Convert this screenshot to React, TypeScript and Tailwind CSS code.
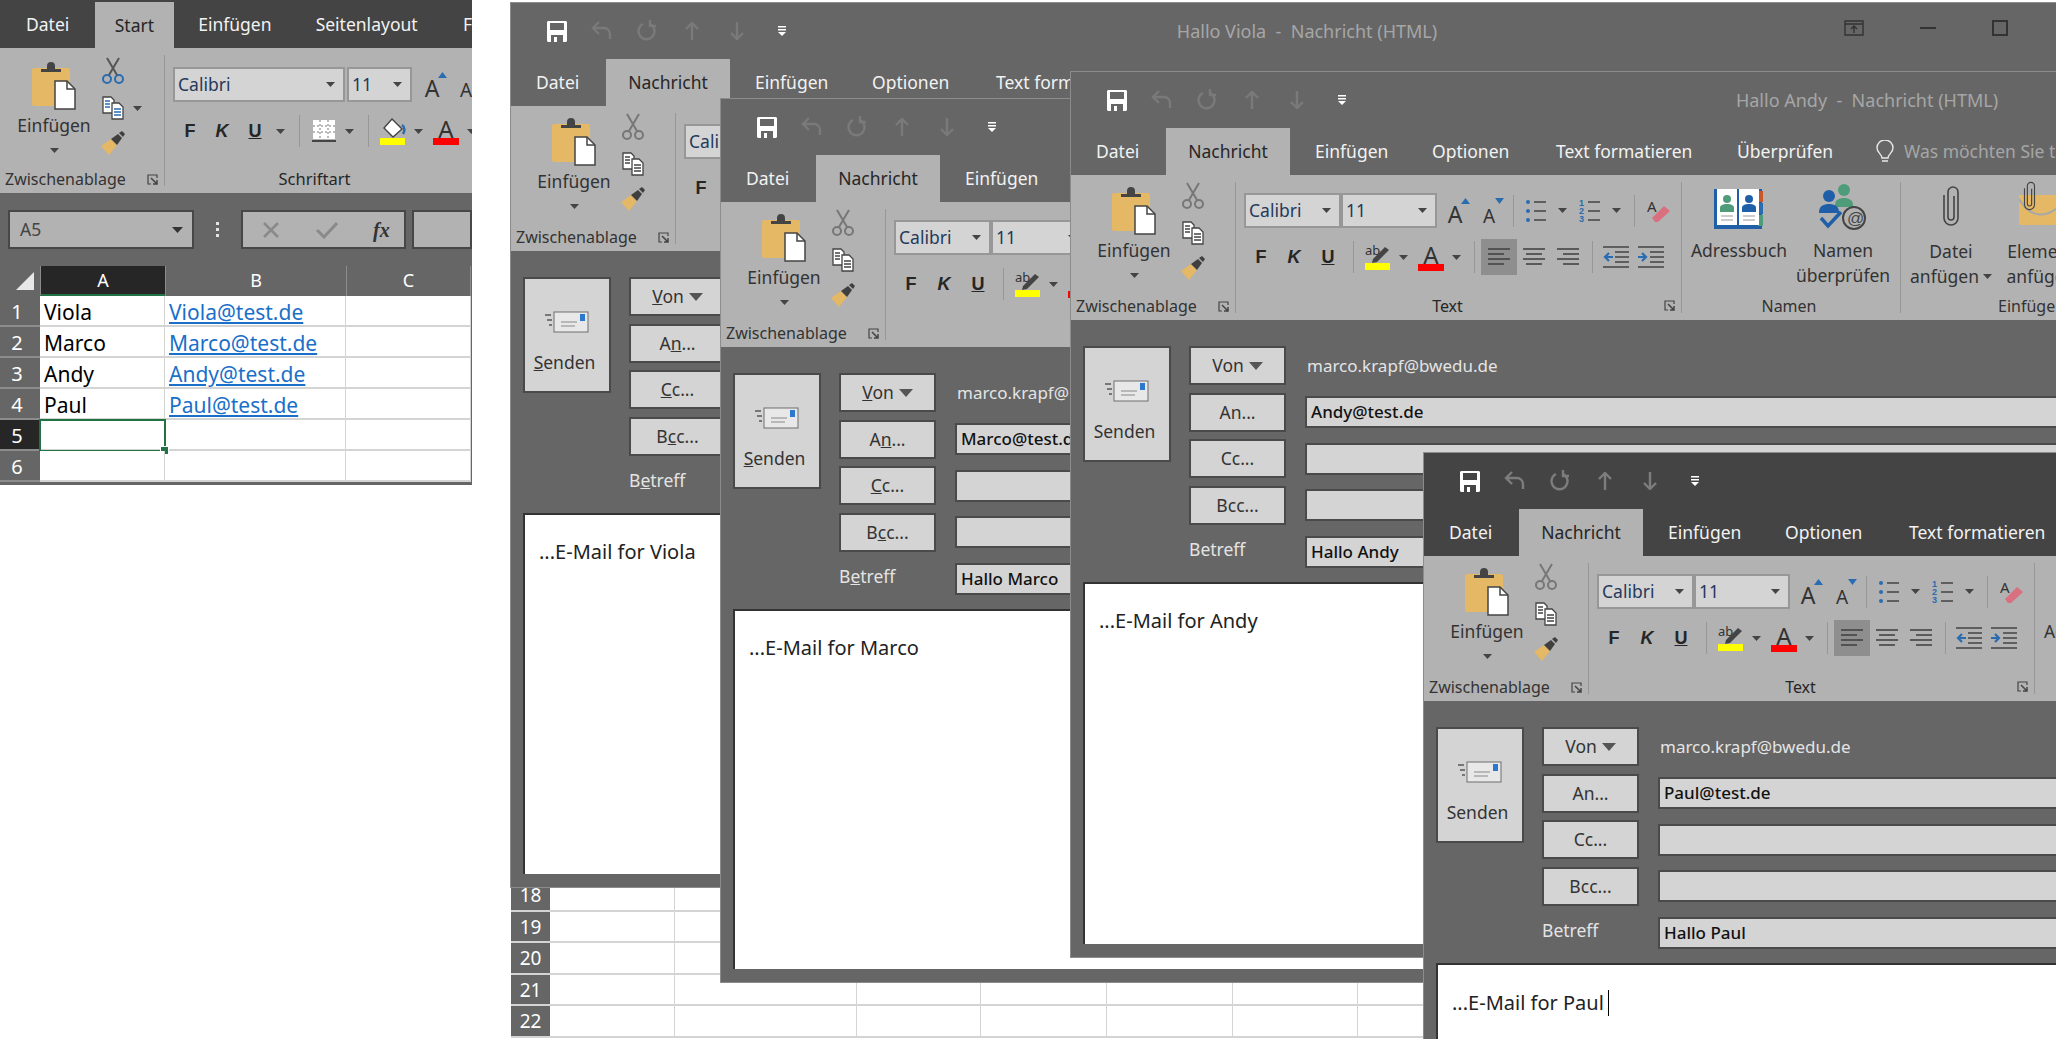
import React from "react";

const Caret = ({ className = "" }: { className?: string }) => (
  <svg width="9" height="5" viewBox="0 0 9 5" className={`shrink-0 ${className}`}>
    <path d="M0 0h9L4.5 5z" fill="#444" />
  </svg>
);

const Sep = ({ className = "" }: { className?: string }) => <div className={`w-px h-[32px] bg-[#979797] shrink-0 ${className}`} />;

const PasteIcon = () => (
  <svg width="44" height="48" viewBox="0 0 44 48">
    <rect x="0" y="6" width="38" height="38" rx="2" fill="#e4b864" />
    <path d="M9 10V7h6V4a4 4 0 0 1 8 0v3h6v3z" fill="#444" />
    <path d="M23 19h12l8 8v20H23z" fill="#fff" stroke="#444" strokeWidth="1.5" />
    <path d="M35 19v8h8" fill="none" stroke="#444" strokeWidth="1.5" />
  </svg>
);

const ScissorsIcon = ({ color, blade }: { color: string; blade: string }) => (
  <svg width="24" height="28" viewBox="0 0 24 28" fill="none" stroke={color} strokeWidth="2">
    <circle cx="6" cy="22" r="4" />
    <circle cx="18" cy="22" r="4" />
    <path d="M8 18 18 1M16 18 6 1" stroke={blade} />
  </svg>
);

const CopyIcon = ({ blue }: { blue?: boolean }) => (
  <svg width="24" height="24" viewBox="0 0 24 24" fill="#fff" stroke="#444" strokeWidth="1.3">
    <path d="M2 1h8l3 3v13H2z" />
    <path d="M4 5h5M4 8h5M4 11h5" stroke={blue ? "#2a6cb0" : "#444"} />
    <path d="M11 7h7l4 4v12H11z" />
    <path d="M13 13h7M13 16h7M13 19h7" stroke={blue ? "#2a6cb0" : "#444"} />
  </svg>
);

const BrushIcon = () => (
  <svg width="26" height="26" viewBox="0 0 26 26">
    <path d="M1 16 11 9l6 6-8 10z" fill="#e4b864" />
    <path d="M11 9l7-5 4 4-5 7z" fill="#3f3f3f" />
    <path d="M19 3l3-2 3 3-2 3z" fill="#3f3f3f" />
  </svg>
);

const Launcher = () => (
  <svg width="11" height="11" viewBox="0 0 11 11" fill="none" stroke="#444" strokeWidth="1.2">
    <path d="M10 4V1H1v9h3" />
    <path d="M4 4l6 6M10 6v4H6" strokeWidth="1.5" />
  </svg>
);

const SaveIcon = ({ bg }: { bg: string }) => (
  <svg width="22" height="23" viewBox="0 0 22 23">
    <path d="M2 1h18l1 1v19l-1 1H2l-1-1V2z" fill="#fff" />
    <rect x="4" y="3" width="14" height="7" fill={bg} />
    <rect x="5" y="15" width="12" height="7" fill={bg} />
    <rect x="8" y="17" width="3" height="5" fill="#fff" />
  </svg>
);

const QuickBar = ({ dim, bg }: { dim: string; bg: string }) => (
  <div className="flex items-center pl-[23px] h-[56px] shrink-0">
    <div className="w-[45px] flex justify-center"><SaveIcon bg={bg} /></div>
    <div className="w-[45px] flex justify-center">
      <svg width="22" height="20" viewBox="0 0 22 20" fill="none" stroke={dim} strokeWidth="2.4">
        <path d="M8 1 2 7l6 6M2 7h11a6 6 0 0 1 6 6v5" />
      </svg>
    </div>
    <div className="w-[45px] flex justify-center">
      <svg width="20" height="22" viewBox="0 0 20 22" fill="none" stroke={dim} strokeWidth="2.4">
        <path d="M13 4a8 8 0 1 1-7 0M13 0v6h6" />
      </svg>
    </div>
    <div className="w-[45px] flex justify-center">
      <svg width="14" height="18" viewBox="0 0 14 18" fill="none" stroke={dim} strokeWidth="2.4">
        <path d="M1 7l6-6 6 6M7 1v17" />
      </svg>
    </div>
    <div className="w-[45px] flex justify-center">
      <svg width="14" height="18" viewBox="0 0 14 18" fill="none" stroke={dim} strokeWidth="2.4">
        <path d="M1 11l6 6 6-6M7 17V0" />
      </svg>
    </div>
    <div className="w-[45px] flex justify-center">
      <svg width="10" height="10" viewBox="0 0 10 10">
        <path d="M1 0h8v1.6H1zM1 3h8v1.6H1z" fill="#fff" />
        <path d="M1 6h8L5 10z" fill="#fff" />
      </svg>
    </div>
  </div>
);

const TabBar = () => (
  <div className="flex h-[47px] shrink-0 text-[#f2f2f2] text-[17.5px] whitespace-nowrap">
    <div className="w-[95px] flex items-center pl-[25px]">Datei</div>
    <div className="w-[124px] flex items-center justify-center bg-[#b2b2b2] text-[#262626]">Nachricht</div>
    <div className="w-[122px] flex items-center pl-[25px]">Einfügen</div>
    <div className="w-[111px] flex items-center pl-[20px]">Optionen</div>
    <div className="w-[198px] flex items-center pl-[33px]">Text formatieren</div>
    <div className="w-[155px] flex items-center pl-[16px]">Überprüfen</div>
    <div className="flex items-center gap-[10px] text-[#a6a6a6]">
      <svg width="18" height="24" viewBox="0 0 18 24" fill="none" stroke="#e8e8e8" strokeWidth="1.4">
        <path d="M6 18c0-4-5-5-5-10a8 8 0 0 1 16 0c0 5-5 6-5 10zM6 21h6" />
      </svg>
      Was möchten Sie tun?
    </div>
  </div>
);

const ClipboardGroup = ({ excel }: { excel?: boolean }) => (
  <div className="relative w-[165px] shrink-0 border-r border-[#979797] text-[#333]">
    <div className={`flex ${excel ? "pt-[7px] pl-[4px]" : "pt-[5px] pl-[13px]"}`}>
      <div className="w-[100px] flex flex-col items-center">
        <PasteIcon />
        <div className="text-[17.5px] leading-[20px] mt-[5px]">Einfügen</div>
        <Caret className="mt-[13px]" />
      </div>
      <div className="w-[36px] flex flex-col items-center -mt-[5px] -ml-[9px]">
        <ScissorsIcon color={excel ? "#2a6cb0" : "#777"} blade={excel ? "#555" : "#777"} />
        <div className="flex items-center relative mt-[11px]">
          <CopyIcon blue={excel} />
          {excel && <Caret className="absolute left-[32px] top-[10px]" />}
        </div>
        <div className="mt-[10px]"><BrushIcon /></div>
      </div>
    </div>
    <div className="absolute left-[5px] right-[6px] -bottom-[3px] flex items-center justify-between text-[16px] leading-[20px]">
      <span>Zwischenablage</span>
      <Launcher />
    </div>
  </div>
);

const Box = ({ text, className }: { text: string; className: string }) => (
  <div className={`h-[35px] shrink-0 bg-[#d4d4d4] border-2 border-[#979797] flex items-center justify-between pl-[3px] pr-[8px] text-[#243a5c] text-[17.5px] ${className}`}>
    <span>{text}</span>
    <Caret />
  </div>
);

const GrowA = ({ small, up }: { small?: boolean; up: boolean }) => (
  <div className="relative flex justify-center items-end h-[30px] text-[#333] w-[30px]">
    <span className={small ? "text-[19px] leading-[20px]" : "text-[23px] leading-[23px]"}>A</span>
    <svg width="9" height="6" viewBox="0 0 9 6" className="absolute right-0 top-[2px]">
      <path d={up ? "M0 6h9L4.5 0z" : "M0 0h9L4.5 6z"} fill="#2a6cb0" />
    </svg>
  </div>
);

const Lines = ({ rows, align }: { rows: number[]; align: "l" | "c" | "r" }) => (
  <svg width="24" height="22" viewBox="0 0 24 22" stroke="#444" strokeWidth="1.6">
    {rows.map((w, i) => {
      const x = align === "l" ? 1 : align === "c" ? 12 - w / 2 : 23 - w;
      return <path key={i} d={`M${x} ${3 + i * 5}h${w}`} />;
    })}
  </svg>
);

const BulletIcon = ({ numbered }: { numbered?: boolean }) => (
  <svg width="22" height="24" viewBox="0 0 22 24" stroke="#444" strokeWidth="1.5">
    <path d="M9 3h12M9 12h12M9 21h12" />
    {numbered ? (
      <g fill="#2a6cb0" stroke="none" fontSize="9" fontFamily="Liberation Sans" fontWeight="700">
        <text x="0" y="7">1</text>
        <text x="0" y="15">2</text>
        <text x="0" y="23">3</text>
      </g>
    ) : (
      <g fill="#2a6cb0" stroke="none">
        <circle cx="3" cy="3" r="2" />
        <circle cx="3" cy="12" r="2" />
        <circle cx="3" cy="21" r="2" />
      </g>
    )}
  </svg>
);

const IndentIcon = ({ out }: { out?: boolean }) => (
  <svg width="26" height="24" viewBox="0 0 26 24" stroke="#444" strokeWidth="1.6" fill="none">
    <path d="M0 2h26M12 7h14M12 12h14M12 17h14M0 22h26" />
    <path d={out ? "M10 12H2m4-4-4 4 4 4" : "M0 12h8m-4-4 4 4-4 4"} stroke="#2a6cb0" strokeWidth="2.2" />
  </svg>
);

const Highlight = () => (
  <svg width="26" height="26" viewBox="0 0 26 26">
    <text x="0" y="11" fontSize="13" fontFamily="Noto Sans" fill="#333">ab</text>
    <path d="M8 15 20 3l4 3-12 12-5 1z" fill="#444" />
    <rect x="0" y="19" width="25" height="7" fill="#ffff00" />
  </svg>
);

const FontColor = () => (
  <div className="relative w-[26px] h-[28px] flex justify-center text-[#333] text-[24px] leading-[24px]">
    A
    <div className="absolute left-0 right-0 bottom-0 h-[7px] bg-[#ff0000]" />
  </div>
);

const Eraser = () => (
  <svg width="24" height="24" viewBox="0 0 24 24">
    <text x="0" y="13" fontSize="15" fontFamily="Noto Sans" fill="#333">A</text>
    <path d="M5 19l12-12 6 5-12 11h-3z" fill="#d9707f" />
  </svg>
);

const boldLetter = "font-['Liberation_Sans',sans-serif] font-bold text-[18px] text-center";

const TextGroup = () => (
  <div className="relative w-[446px] shrink-0 border-r border-[#979797] pl-[8px] pt-[11px] text-[#262626]">
    <div className="flex items-center h-[35px]">
      <Box text="Calibri" className="w-[97px]" />
      <Box text="11" className="w-[96px]" />
      <div className="w-[36px] flex justify-center"><GrowA up /></div>
      <div className="w-[32px] flex justify-center"><GrowA small up={false} /></div>
      <Sep className="ml-[8px]" />
      <div className="ml-[11px]"><BulletIcon /></div>
      <Caret className="ml-[11px]" />
      <div className="ml-[12px]"><BulletIcon numbered /></div>
      <Caret className="ml-[11px]" />
      <Sep className="ml-[13px]" />
      <div className="ml-[12px]"><Eraser /></div>
    </div>
    <div className="flex items-center h-[36px] mt-[11px]">
      <div className={`w-[34px] ${boldLetter}`}>F</div>
      <div className={`w-[32px] italic ${boldLetter}`}>K</div>
      <div className={`w-[36px] underline ${boldLetter}`}>U</div>
      <Sep className="ml-[7px]" />
      <div className="ml-[11px]"><Highlight /></div>
      <Caret className="ml-[8px]" />
      <div className="ml-[10px]"><FontColor /></div>
      <Caret className="ml-[8px]" />
      <Sep className="ml-[13px]" />
      <div className="ml-[6px] w-[36px] h-[36px] bg-[#8e8e8e] flex items-center justify-center">
        <Lines rows={[22, 16, 22, 16]} align="l" />
      </div>
      <div className="w-[35px] flex justify-center ml-[-1px]"><Lines rows={[22, 16, 22, 16]} align="c" /></div>
      <div className="w-[33px] flex justify-center"><Lines rows={[22, 16, 22, 16]} align="r" /></div>
      <Sep className="ml-[8px]" />
      <div className="ml-[10px]"><IndentIcon out /></div>
      <div className="ml-[9px]"><IndentIcon /></div>
    </div>
    <div className="absolute left-0 right-[6px] -bottom-[3px] text-[16px] leading-[20px]">
      <div className="text-center pr-[16px]">Text</div>
      <div className="absolute right-0 top-[4px]"><Launcher /></div>
    </div>
  </div>
);

const AddressBook = () => (
  <svg width="50" height="42" viewBox="0 0 50 42">
    <path d="M0 1h48v40H0z" fill="#1f5fa8" />
    <path d="M44 3h5v11h-5z" fill="#c9572c" />
    <path d="M44 15h5v11h-5z" fill="#2a6cb0" />
    <path d="M44 27h5v11h-5z" fill="#4f9c7a" />
    <path d="M3 1h20v36H3zM25 1h20v36H25z" fill="#fff" />
    <circle cx="13" cy="11" r="4" fill="#4f9c7a" />
    <path d="M6 24v-4c0-3 3-4 7-4s7 1 7 4v4z" fill="#4f9c7a" />
    <circle cx="35" cy="11" r="4" fill="#1f5fa8" />
    <path d="M28 24v-4c0-3 3-4 7-4s7 1 7 4v4z" fill="#1f5fa8" />
    <path d="M7 28h12M7 32h12M29 28h12M29 32h12" stroke="#999" />
  </svg>
);

const NamesIcon = () => (
  <svg width="50" height="48" viewBox="0 0 50 48">
    <circle cx="26" cy="7" r="6" fill="#4f9c7a" />
    <path d="M17 22c0-5 4-7 9-7s9 2 9 7v2H17z" fill="#4f9c7a" />
    <circle cx="11" cy="13" r="6" fill="#1f5fa8" />
    <path d="M1 29c0-6 5-8 10-8s10 2 10 8v1H1z" fill="#1f5fa8" />
    <path d="M3 35l7 8L23 29" fill="none" stroke="#1f5fa8" strokeWidth="3.5" />
    <circle cx="36" cy="35" r="11" fill="#b2b2b2" stroke="#444" strokeWidth="2" />
    <text x="29" y="41" fontSize="17" fontFamily="Liberation Sans" fill="#444">@</text>
  </svg>
);

const Clip = ({ h = 42 }: { h?: number }) => (
  <svg width={Math.round(h * 0.42)} height={h} viewBox="0 0 18 42" fill="none" stroke="#444" strokeWidth="1.6">
    <path d="M12 11v21a3 3 0 0 1-6 0V7a5 5 0 0 1 10 0v26a7 7 0 0 1-14 0V10" />
  </svg>
);

const NamenGroup = () => (
  <div className="relative w-[219px] shrink-0 border-r border-[#979797] text-[#333] text-[17.5px] leading-[25px] text-center flex">
    <div className="w-[114px] flex flex-col items-center pt-[6px]">
      <AddressBook />
      <div className="mt-[8px]">Adressbuch</div>
    </div>
    <div className="w-[94px] flex flex-col items-center pt-[1px] whitespace-nowrap">
      <NamesIcon />
      <div className="mt-[7px]">Namen</div>
      <div>überprüfen</div>
    </div>
    <div className="absolute left-0 right-[4px] -bottom-[3px] text-[16px] leading-[20px]">Namen</div>
  </div>
);

const AttachGroup = () => (
  <div className="relative w-[300px] shrink-0 text-[#333] text-[17.5px] leading-[25px] text-center flex">
    <div className="w-[90px] ml-[5px] flex flex-col items-center pt-[3px]">
      <Clip />
      <div className="mt-[12px]">Datei</div>
      <div className="flex items-center gap-[4px]">anfügen <Caret /></div>
    </div>
    <div className="w-[90px] flex flex-col items-center pt-[3px]">
      <div className="relative w-[44px] h-[42px]">
        <svg width="44" height="30" viewBox="0 0 44 30" className="absolute left-0 top-[10px]">
          <path d="M0 0h44v30H0z" fill="#e4b864" />
          <path d="M0 4c12 20 28 20 44 4" fill="none" stroke="#a8a8a8" strokeWidth="2" />
        </svg>
        <div className="absolute left-[4px] top-[-4px]"><Clip h={30} /></div>
      </div>
      <div className="mt-[12px]">Element</div>
      <div>anfügen</div>
    </div>
    <div className="absolute left-[97px] -bottom-[3px] text-[16px] leading-[20px]">Einfügen</div>
  </div>
);

const SendIcon = () => (
  <svg width="44" height="22" viewBox="0 0 44 22">
    <rect x="9" y="1" width="34" height="20" fill="#e8e8e8" stroke="#6e6e6e" />
    <path d="M16 11h16M16 15h14" stroke="#a8a8a8" strokeWidth="1.5" />
    <rect x="35" y="3" width="5" height="7" fill="#2b78d0" />
    <path d="M0 4h6M2 9h5M4 14h3" stroke="#777" strokeWidth="2" />
  </svg>
);

const SideButton = ({ children }: { children: React.ReactNode }) => (
  <div className="w-[97px] h-[39px] bg-[#d4d4d4] border-2 border-[#4a4a4a] flex items-center justify-center gap-[5px] text-[#333] text-[17.5px] shrink-0">
    {children}
  </div>
);

const Field = ({ text }: { text?: string }) => (
  <div className="ml-[19px] flex-1 h-[32px] bg-[#d4d4d4] border-2 border-[#4a4a4a] flex items-center pl-[4px] text-[17px] font-medium text-[#111]">
    {text}
  </div>
);

// accel: the two background windows still show their keyboard underlines
const Key = ({ on, children }: { on?: boolean; children: React.ReactNode }) => (
  <span className={on ? "underline" : ""}>{children}</span>
);

type MailProps = {
  frame: string;
  title?: string;
  email: string;
  to: string;
  subject: string;
  body: string;
  active?: boolean;
  accel?: boolean;
};

const MailWindow = ({ frame, title, email, to, subject, body, active, accel }: MailProps) => (
  <div className={`absolute ${frame} w-[1600px] flex flex-col border border-[#8c8c8c] ${active ? "bg-[#444]" : "bg-[#666]"}`}>
    <QuickBar dim={active ? "#7d7d7d" : "#7a7a7a"} bg={active ? "#444" : "#666"} />
    {title && (
      <div className="absolute left-[796px] top-[15px] -translate-x-1/2 text-[#a6a6a6] text-[18px] whitespace-pre">{title}</div>
    )}
    {title && (
      <div className="absolute left-[1333px] top-[17px] flex items-center">
        <div className="w-[76px] flex justify-start">
          <svg width="20" height="16" viewBox="0 0 20 16" fill="none" stroke="#333" strokeWidth="1.4">
            <path d="M1 1h18v14H1zM1 4h18M10 13V6M7 9l3-3 3 3" />
          </svg>
        </div>
        <div className="w-[72px] flex"><div className="w-[16px] h-[2px] bg-[#333]" /></div>
        <div className="w-[16px] h-[16px] border-2 border-[#333]" />
      </div>
    )}
    <TabBar />
    <div className="flex h-[145px] shrink-0 bg-[#b2b2b2] py-[7px]">
      <ClipboardGroup />
      <TextGroup />
      <NamenGroup />
      <AttachGroup />
    </div>
    <div className="flex-1 flex flex-col bg-[#666] min-h-0">
      <div className="flex px-[12px] pt-[26px] shrink-0">
        <div className="w-[88px] h-[116px] bg-[#d4d4d4] border-2 border-[#4a4a4a] flex flex-col items-center pt-[32px] text-[#333] text-[17.5px] leading-[24px] mr-[18px] shrink-0">
          <SendIcon />
          <div className="mt-[17px] pr-[5px]"><Key on={accel}>S</Key>enden</div>
        </div>
        <div className="flex-1 flex flex-col gap-[7.5px]">
          <div className="flex items-center">
            <SideButton>
              <span><Key on={accel}>V</Key>on</span>
              <svg width="14" height="8" viewBox="0 0 14 8"><path d="M0 0h14L7 8z" fill="#555" /></svg>
            </SideButton>
            <div className="ml-[21px] text-[17px] text-[#e4e4e4]">{email}</div>
          </div>
          <div className="flex items-center"><SideButton><span>A<Key on={accel}>n</Key>...</span></SideButton><Field text={to} /></div>
          <div className="flex items-center"><SideButton><span><Key on={accel}>C</Key>c...</span></SideButton><Field /></div>
          <div className="flex items-center"><SideButton><span>B<Key on={accel}>c</Key>c...</span></SideButton><Field /></div>
          <div className="flex items-center h-[39px]">
            <div className="w-[97px] pb-[4px] text-[17.5px] text-[#e4e4e4] shrink-0">B<Key on={accel}>e</Key>treff</div>
            <Field text={subject} />
          </div>
        </div>
      </div>
      <div className="mx-[12px] mt-[11px] mb-[13px] flex-1 bg-white border-t-2 border-l-2 border-[#333] pl-[14px] pt-[25px]">
        <div className="flex items-center text-[20px] leading-[24px] text-[#222]">
          {body}
          {active && <span className="ml-[4px] w-[1px] h-[26px] bg-black" />}
        </div>
      </div>
    </div>
  </div>
);

const excelRows = [
  { n: "1", name: "Viola", mail: "Viola@test.de" },
  { n: "2", name: "Marco", mail: "Marco@test.de" },
  { n: "3", name: "Andy", mail: "Andy@test.de" },
  { n: "4", name: "Paul", mail: "Paul@test.de" },
  { n: "5", name: "", mail: "" },
  { n: "6", name: "", mail: "" },
];

const ExcelWindow = () => (
  <div className="absolute left-0 top-0 w-[472px] h-[485px] overflow-hidden flex flex-col bg-[#666]">
    <div className="flex h-[48px] shrink-0 bg-[#444] text-[#f2f2f2] text-[17.5px]">
      <div className="w-[95px] flex items-center pl-[26px]">Datei</div>
      <div className="w-[80px] flex items-center justify-center bg-[#b2b2b2] text-[#262626] mt-[2px]">Start</div>
      <div className="w-[118px] flex items-center pl-[24px]">Einfügen</div>
      <div className="w-[148px] flex items-center pl-[24px]">Seitenlayout</div>
      <div className="flex items-center pl-[24px]">F</div>
    </div>
    <div className="flex h-[145px] shrink-0 bg-[#b2b2b2] py-[7px] overflow-hidden">
      <ClipboardGroup excel />
      <div className="relative flex-1 pl-[8px] pt-[12px] text-[#262626]">
        <div className="flex items-center h-[35px] whitespace-nowrap">
          <Box text="Calibri" className="w-[172px]" />
          <Box text="11" className="w-[65px] ml-[2px]" />
          <div className="w-[36px] ml-[2px] flex justify-center shrink-0"><GrowA up /></div>
          <div className="w-[32px] shrink-0 flex justify-center"><GrowA small up={false} /></div>
        </div>
        <div className="flex items-center h-[36px] mt-[11px]">
          <div className={`w-[34px] ${boldLetter}`}>F</div>
          <div className={`w-[30px] italic ${boldLetter}`}>K</div>
          <div className={`w-[36px] underline ${boldLetter}`}>U</div>
          <Caret className="ml-[3px]" />
          <Sep className="ml-[14px]" />
          <svg width="24" height="24" viewBox="0 0 24 24" className="ml-[12px] shrink-0">
            <rect x="1" y="1" width="22" height="19" fill="#fff" />
            <path d="M1 7h22M1 13h22M8 1v19M16 1v19" stroke="#777" strokeDasharray="2 2" />
            <path d="M0 22h24" stroke="#444" strokeWidth="2" />
          </svg>
          <Caret className="ml-[9px]" />
          <Sep className="ml-[14px]" />
          <svg width="26" height="28" viewBox="0 0 26 28" className="ml-[11px] shrink-0">
            <path d="M12 2l10 10-9 8-9-9z" fill="#fff" stroke="#444" strokeWidth="1.4" />
            <path d="M22 8c3 2 3 6 1 9" fill="none" stroke="#2a6cb0" strokeWidth="2.5" />
            <rect x="0" y="21" width="25" height="7" fill="#ffff00" />
          </svg>
          <Caret className="ml-[8px]" />
          <div className="ml-[10px] shrink-0"><FontColor /></div>
          <Caret className="ml-[8px]" />
        </div>
        <div className="absolute left-0 right-[12px] -bottom-[3px] text-center text-[16.5px] leading-[20px] pr-[6px]">Schriftart</div>
      </div>
    </div>
    <div className="flex items-center h-[73px] shrink-0 pl-[8px]">
      <div className="w-[192px] h-[39px] bg-[#b2b2b2] border-2 border-[#474747] flex items-center justify-between pl-[10px] pr-[9px] text-[#444] text-[17.5px]">
        A5
        <svg width="11" height="6" viewBox="0 0 11 6"><path d="M0 0h11L5.5 6z" fill="#333" /></svg>
      </div>
      <div className="w-[49px] flex flex-col items-center gap-[3px]">
        <div className="w-[3px] h-[3px] bg-[#e4e4e4]" />
        <div className="w-[3px] h-[3px] bg-[#e4e4e4]" />
        <div className="w-[3px] h-[3px] bg-[#e4e4e4]" />
      </div>
      <div className="w-[171px] h-[39px] bg-[#b2b2b2] border-2 border-[#474747] flex items-center">
        <svg width="18" height="18" viewBox="0 0 18 18" className="ml-[19px]" fill="none" stroke="#8a8a8a" strokeWidth="2.5"><path d="M2 2l14 14M16 2 2 16" /></svg>
        <svg width="22" height="18" viewBox="0 0 22 18" className="ml-[36px]" fill="none" stroke="#8a8a8a" strokeWidth="3"><path d="M1 9l7 7L21 2" /></svg>
        <span className="ml-[35px] font-['Liberation_Serif',serif] italic font-bold text-[#333] text-[20px]">fx</span>
      </div>
      <div className="ml-[6px] w-[60px] h-[39px] bg-[#b2b2b2] border-2 border-[#474747] shrink-0" />
    </div>
    <div className="flex h-[30px] shrink-0 text-white text-[18px] text-center leading-[28px]">
      <div className="w-[40px] relative">
        <svg width="18" height="18" viewBox="0 0 18 18" className="absolute left-[16px] top-[6px]"><path d="M18 0v18H0z" fill="#e8e8e8" /></svg>
      </div>
      <div className="w-[125px] bg-[#262626] border-b-2 border-b-[#217346] border-l border-l-[#8c8c8c]">A</div>
      <div className="w-[181px] border-l border-[#8c8c8c]">B</div>
      <div className="w-[125px] border-x border-[#8c8c8c]">C</div>
    </div>
    {excelRows.map((r) => (
      <div key={r.n} className="flex h-[31px] shrink-0 leading-[33px]">
        <div className={`w-[40px] shrink-0 border-b-2 border-[#8c8c8c] text-white text-center pr-[6px] text-[20px] leading-[31px] ${r.n === "5" ? "bg-[#262626]" : "bg-[#666]"}`}>{r.n}</div>
        <div className="relative w-[125px] bg-white border-b-2 border-r border-[#d4d4d4] pl-[4px] text-black text-[21px]">
          {r.name}
          {r.n === "5" && (
            <div className="absolute -left-px -top-px w-[127px] h-[33px] border-[2.5px] border-[#217346]">
              <div className="absolute -right-[5px] -bottom-[5px] w-[9px] h-[9px] bg-[#217346] border border-white" />
            </div>
          )}
        </div>
        <div className="w-[181px] bg-white border-b-2 border-r border-[#d4d4d4] pl-[4px] text-[#1a6fc9] underline text-[21px]">{r.mail}</div>
        <div className="w-[125px] bg-white border-b-2 border-r border-[#d4d4d4]" />
      </div>
    ))}
  </div>
);

const sheetRows = ["18", "19", "20", "21", "22"];
const sheetCols = ["w-[125px]", "w-[182px]", "w-[124px]", "w-[126px]", "w-[126px]", "w-[125px]", "w-[125px]"];

const SheetBehind = () => (
  <div className="absolute left-[511px] top-[880px] w-[1100px] flex flex-col bg-white">
    {sheetRows.map((n) => (
      <div key={n} className="flex h-[31.5px] border-b-2 border-[#d4d4d4]">
        <div className="w-[39px] bg-[#666] text-white text-center text-[19px] leading-[30px]">{n}</div>
        {sheetCols.map((c, i) => (
          <div key={i} className={`${c} border-r border-[#d4d4d4]`} />
        ))}
      </div>
    ))}
  </div>
);

export default function App() {
  return (
    <div className="relative w-[2056px] h-[1039px] overflow-hidden bg-white font-['Noto_Sans',sans-serif]">
      <ExcelWindow />
      <SheetBehind />
      <MailWindow
        frame="left-[510px] top-[2px] h-[886px]"
        title="Hallo Viola  -  Nachricht (HTML)"
        email="marco.krapf@bwedu.de"
        to="Viola@test.de"
        subject="Hallo Viola"
        body="...E-Mail for Viola"
        accel
      />
      <MailWindow
        frame="left-[720px] top-[98px] h-[885px]"
        email="marco.krapf@bwedu.de"
        to="Marco@test.de"
        subject="Hallo Marco"
        body="...E-Mail for Marco"
        accel
      />
      <MailWindow
        frame="left-[1070px] top-[71px] h-[887px]"
        title="Hallo Andy  -  Nachricht (HTML)"
        email="marco.krapf@bwedu.de"
        to="Andy@test.de"
        subject="Hallo Andy"
        body="...E-Mail for Andy"
      />
      <MailWindow
        frame="left-[1423px] top-[452px] h-[800px]"
        email="marco.krapf@bwedu.de"
        to="Paul@test.de"
        subject="Hallo Paul"
        body="...E-Mail for Paul"
        active
      />
    </div>
  );
}
